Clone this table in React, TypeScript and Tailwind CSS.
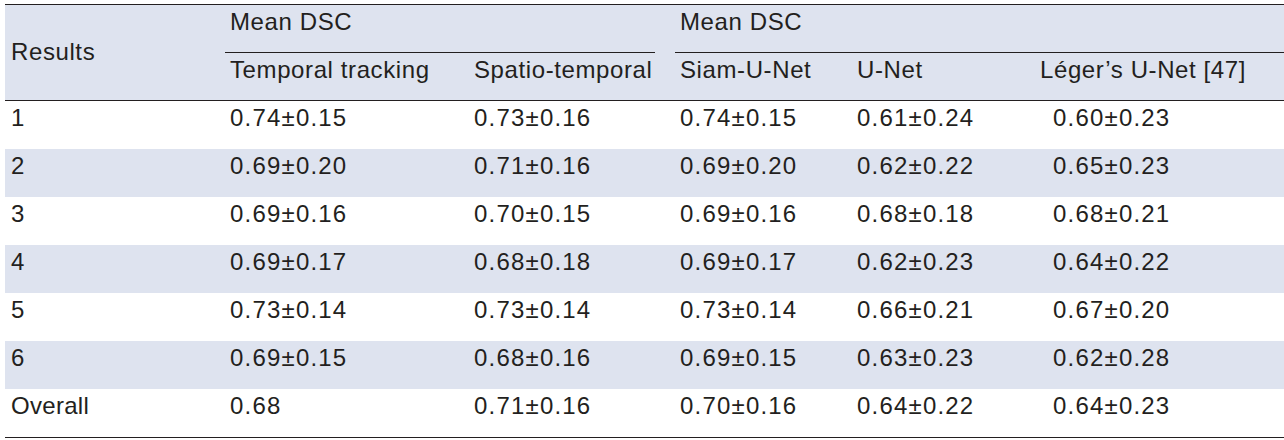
import React from "react";

const cols = "grid grid-cols-[220px_244px_206px_177px_183px_1fr]";

const rows: [string, string, string, string, string, string][] = [
  ["1", "0.74±0.15", "0.73±0.16", "0.74±0.15", "0.61±0.24", "0.60±0.23"],
  ["2", "0.69±0.20", "0.71±0.16", "0.69±0.20", "0.62±0.22", "0.65±0.23"],
  ["3", "0.69±0.16", "0.70±0.15", "0.69±0.16", "0.68±0.18", "0.68±0.21"],
  ["4", "0.69±0.17", "0.68±0.18", "0.69±0.17", "0.62±0.23", "0.64±0.22"],
  ["5", "0.73±0.14", "0.73±0.14", "0.73±0.14", "0.66±0.21", "0.67±0.20"],
  ["6", "0.69±0.15", "0.68±0.16", "0.69±0.15", "0.63±0.23", "0.62±0.28"],
  ["Overall", "0.68", "0.71±0.16", "0.70±0.16", "0.64±0.22", "0.64±0.23"],
];

const hd = "h-[47px] pt-[5px] pl-[5px] whitespace-nowrap tracking-[0.6px]";
const num = "pt-[5px] pl-[5px] whitespace-nowrap tracking-[1.2px]";

export default function App() {
  return (
    <div className="w-[1284px] h-[440px] bg-white pt-[4px] pl-[5px] font-['Liberation_Sans',Arial,sans-serif] text-[24px] leading-[24px] text-[#231f20] overflow-hidden">
      <div className="border-t border-b border-[#231f20]">
        <div className={`${cols} bg-[#dee3ef] border-b border-[#231f20]`}>
          <div className="row-span-2 flex items-center pl-[6px] pb-[2px] tracking-[0.6px]">Results</div>
          <div className="col-span-2 h-[48px] pt-[5px] pl-[5px] mr-[20px] border-b border-[#231f20] whitespace-nowrap tracking-[0.6px]">Mean DSC</div>
          <div className="col-span-3 h-[48px] pt-[5px] pl-[5px] border-b border-[#231f20] whitespace-nowrap tracking-[0.6px]">Mean DSC</div>
          <div className={hd}>Temporal tracking</div>
          <div className={hd}>Spatio-temporal</div>
          <div className={hd}>Siam-U-Net</div>
          <div className={hd}>U-Net</div>
          <div className={hd}>Léger’s U-Net [47]</div>
        </div>
        {rows.map((r, i) => (
          <div key={i} className={`${cols} h-[48px] ${i % 2 === 1 ? "bg-[#dee3ef]" : "bg-white"}`}>
            <div className="pt-[5px] pl-[6px] tracking-[0.3px]">{r[0]}</div>
            <div className={num}>{r[1]}</div>
            <div className={num}>{r[2]}</div>
            <div className={num}>{r[3]}</div>
            <div className={num}>{r[4]}</div>
            <div className="pt-[5px] pl-[18px] whitespace-nowrap tracking-[1.2px]">{r[5]}</div>
          </div>
        ))}
      </div>
    </div>
  );
}
